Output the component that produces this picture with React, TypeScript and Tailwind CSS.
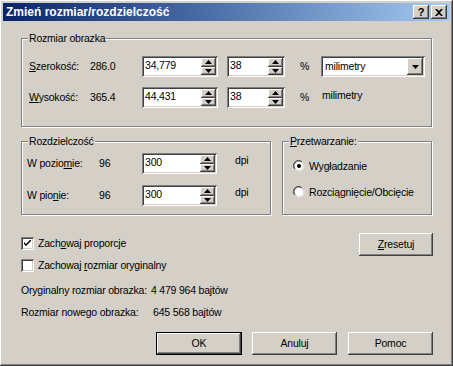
import React from "react";

const raised =
  "shadow-[inset_-1px_-1px_#404040,inset_1px_1px_#ffffff,inset_-2px_-2px_#808080,inset_2px_2px_#d4d0c8]";
const sunken =
  "shadow-[inset_1px_1px_#808080,inset_-1px_-1px_#ffffff,inset_2px_2px_#404040,inset_-2px_-2px_#d4d0c8]";

function Tri({ down }: { down?: boolean }) {
  return (
    <svg width="7" height="4" viewBox="0 0 7 4">
      <polygon points={down ? "0,0 7,0 3.5,4" : "0,4 7,4 3.5,0"} fill="#000" />
    </svg>
  );
}

function SpinBox({ value, className }: { value: string; className: string }) {
  return (
    <div className={`flex h-[21px] shrink-0 bg-white p-[2px] ${sunken} ${className}`}>
      <span className="flex-1 pl-[1px] leading-[14px]">{value}</span>
      <div className="flex w-[15px] flex-col">
        <div className={`flex flex-1 items-center justify-center bg-[#d4d0c8] ${raised}`}>
          <Tri />
        </div>
        <div className={`flex flex-1 items-center justify-center bg-[#d4d0c8] ${raised}`}>
          <Tri down />
        </div>
      </div>
    </div>
  );
}

function Group({ title, className, children }: { title: React.ReactNode; className: string; children: React.ReactNode }) {
  return (
    <div className={`relative border border-[#808080] shadow-[inset_1px_1px_#ffffff,1px_1px_#ffffff] ${className}`}>
      <span className="absolute left-[6px] top-[-7px] bg-[#d4d0c8] px-[1px] leading-[13px]">{title}</span>
      {children}
    </div>
  );
}

function Button({ children, isDefault, className = "" }: { children: React.ReactNode; isDefault?: boolean; className?: string }) {
  if (isDefault) {
    return (
      <div className={`h-[23px] border border-black ${className}`}>
        <div className={`flex h-full items-center justify-center bg-[#d4d0c8] ${raised}`}>{children}</div>
      </div>
    );
  }
  return (
    <div className={`flex h-[23px] items-center justify-center bg-[#d4d0c8] ${raised} ${className}`}>{children}</div>
  );
}

function Radio({ checked, label }: { checked?: boolean; label: React.ReactNode }) {
  return (
    <div className="flex h-[12px] items-center gap-[4px]">
      <svg width="12" height="12" viewBox="0 0 12 12">
        <path d="M1 8 A5.5 5.5 0 0 1 8 1" stroke="#808080" fill="none" strokeWidth="1" />
        <path d="M2 9 A4.5 4.5 0 0 1 9 2" stroke="#404040" fill="none" strokeWidth="1" />
        <circle cx="6" cy="6" r="4" fill="#fff" />
        <path d="M4 11 A5.5 5.5 0 0 0 11 4" stroke="#fff" fill="none" strokeWidth="1" />
        <path d="M3 10 A4.5 4.5 0 0 0 10 3" stroke="#d4d0c8" fill="none" strokeWidth="1" />
        {checked && <circle cx="6" cy="6" r="2" fill="#000" />}
      </svg>
      <span className="leading-[13px]">{label}</span>
    </div>
  );
}

function Check({ checked, label }: { checked?: boolean; label: React.ReactNode }) {
  return (
    <div className="flex h-[13px] items-center gap-[4px]">
      <div className={`flex h-[13px] w-[13px] items-center justify-center bg-white ${sunken}`}>
        {checked && (
          <svg width="7" height="7" viewBox="0 0 7 7">
            <path d="M0 2 L0 4 L2 6 L7 1 L7 -1 L2 4 Z" fill="#000" />
          </svg>
        )}
      </div>
      <span className="leading-[13px]">{label}</span>
    </div>
  );
}

export default function App() {
  return (
    <div
      className={`flex h-[366px] w-[453px] flex-col overflow-hidden whitespace-nowrap bg-[#d4d0c8] p-[3px] text-[10.5px] tracking-[-0.2px] text-black ${raised}`}
      style={{ fontFamily: '"Liberation Sans", Arial, sans-serif' }}
    >
      {/* Title bar */}
      <div className="flex h-[18px] shrink-0 items-center bg-gradient-to-r from-[#0a246a] to-[#a6caf0] pl-[3px] pr-[3px] tracking-normal">
        <span className="flex-1 text-[12px] font-bold leading-[18px] text-white">Zmień rozmiar/rozdzielczość</span>
        <div className={`flex h-[14px] w-[16px] items-center justify-center bg-[#d4d0c8] ${raised}`}>
          <span className="text-[11px] font-bold leading-[11px]">?</span>
        </div>
        <div className={`ml-[2px] flex h-[14px] w-[16px] items-center justify-center bg-[#d4d0c8] ${raised}`}>
          <svg width="8" height="7" viewBox="0 0 8 7">
            <path d="M0 0 L2 0 L4 2 L6 0 L8 0 L5 3.5 L8 7 L6 7 L4 5 L2 7 L0 7 L3 3.5 Z" fill="#000" />
          </svg>
        </div>
      </div>

      <div className="flex flex-1 flex-col px-[18px]">
        {/* Rozmiar obrazka */}
        <Group title="Rozmiar obrazka" className="mt-[17px] h-[89px] shrink-0">
          <div className="flex flex-col gap-[10px] pl-[7px] pt-[17px]">
            <div className="flex h-[21px] items-center">
              <span className="w-[61px] shrink-0">
                <u>S</u>zerokość:
              </span>
              <span className="w-[52px] shrink-0">286.0</span>
              <SpinBox value="34,779" className="w-[76px]" />
              <SpinBox value="38" className="ml-[9px] w-[58px]" />
              <span className="ml-[15px] w-[21px] shrink-0">%</span>
              <div className={`flex h-[21px] w-[104px] shrink-0 bg-white p-[2px] ${sunken}`}>
                <span className="flex-1 pl-[2px] leading-[17px]">milimetry</span>
                <div className={`flex w-[16px] items-center justify-center bg-[#d4d0c8] ${raised}`}>
                  <Tri down />
                </div>
              </div>
            </div>
            <div className="flex h-[21px] items-center">
              <span className="w-[61px] shrink-0">
                <u>W</u>ysokość:
              </span>
              <span className="w-[52px] shrink-0">365.4</span>
              <SpinBox value="44,431" className="w-[76px]" />
              <SpinBox value="38" className="ml-[9px] w-[58px]" />
              <span className="ml-[15px] w-[22px] shrink-0">%</span>
              <span className="mb-[4px]">milimetry</span>
            </div>
          </div>
        </Group>

        <div className="mt-[14px] flex h-[74px] shrink-0 gap-[11px]">
          {/* Rozdzielczość */}
          <Group title="Rozdzielczość" className="w-[250px]">
            <div className="flex flex-col gap-[11px] pl-[5px] pt-[11px]">
              <div className="flex h-[21px] items-center">
                <span className="w-[72px] shrink-0">
                  W pozio<u>m</u>ie:
                </span>
                <span className="w-[43px] shrink-0">96</span>
                <SpinBox value="300" className="w-[75px]" />
                <span className="mb-[5px] ml-[18px]">dpi</span>
              </div>
              <div className="flex h-[21px] items-center">
                <span className="w-[72px] shrink-0">
                  W pio<u>n</u>ie:
                </span>
                <span className="w-[43px] shrink-0">96</span>
                <SpinBox value="300" className="w-[75px]" />
                <span className="mb-[5px] ml-[18px]">dpi</span>
              </div>
            </div>
          </Group>

          {/* Przetwarzanie */}
          <Group
            title={
              <>
                <u>P</u>rzetwarzanie:
              </>
            }
            className="flex-1"
          >
            <div className="flex flex-col gap-[14px] pl-[10px] pt-[18px]">
              <Radio checked label="Wygładzanie" />
              <Radio label="Rozciągnięcie/Obcięcie" />
            </div>
          </Group>
        </div>

        <div className="mt-[18px] flex shrink-0 items-start justify-between">
          <div className="flex flex-col gap-[9px] pt-[4px]">
            <Check
              checked
              label={
                <>
                  Zach<u>o</u>waj proporcje
                </>
              }
            />
            <Check
              label={
                <>
                  Zachowaj <u>r</u>ozmiar oryginalny
                </>
              }
            />
          </div>
          <Button className="mr-[-1px] w-[74px]">
            <span>
              <u>Z</u>resetuj
            </span>
          </Button>
        </div>

        <div className="mt-[12px] flex shrink-0 flex-col gap-[9px] leading-[13px]">
          <div className="flex gap-[4px]">
            <span>Oryginalny rozmiar obrazka:</span>
            <span>4 479 964 bajtów</span>
          </div>
          <div className="flex">
            <span className="w-[132px] shrink-0">Rozmiar nowego obrazka:</span>
            <span>645 568 bajtów</span>
          </div>
        </div>

        <div className="mr-[-1px] mt-[13px] flex shrink-0 justify-end gap-[10px]">
          <Button isDefault className="w-[86px]">
            OK
          </Button>
          <Button className="w-[85px]">Anuluj</Button>
          <Button className="ml-[1px] w-[85px]">Pomoc</Button>
        </div>
      </div>
    </div>
  );
}
